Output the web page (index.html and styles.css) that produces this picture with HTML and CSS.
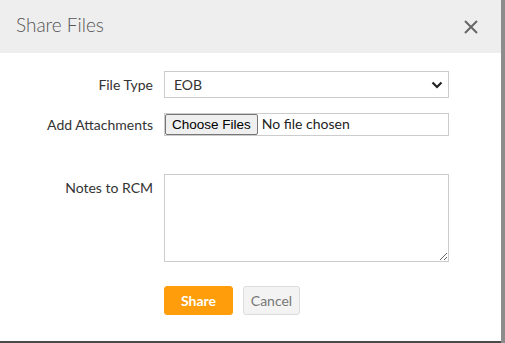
FILE: index.html
```html
<!DOCTYPE html>
<html lang="en">
<head>
    <meta charset="UTF-8">
    <meta name="viewport" content="width=device-width, initial-scale=1.0">
    <title>Share Files</title>
    <link rel="stylesheet" href="styles.css">
</head>
<body>

    <!-- Share Files modal -->
    <div class="modal">
        <div class="modal-header">
            <h4 class="modal-title">Share Files</h4>
            <button class="close-btn" aria-label="Close">
                <svg width="16" height="16" viewBox="0 0 16 16">
                    <path d="M2 2 L14 14 M14 2 L2 14" stroke="#666" stroke-width="2" fill="none"/>
                </svg>
            </button>
        </div>

        <form class="modal-body">
            <label class="form-label">File Type</label>
            <div class="select-wrap">
                <select class="form-select">
                    <option>EOB</option>
                </select>
                <svg class="chevron" width="12" height="8" viewBox="0 0 12 8">
                    <path d="M1.5 1.5 L6 6 L10.5 1.5" stroke="#222" stroke-width="2.2" fill="none"/>
                </svg>
            </div>

            <label class="form-label">Add Attachments</label>
            <input type="file" class="form-file" multiple>

            <label class="form-label notes-label">Notes to RCM</label>
            <textarea class="form-notes"></textarea>

            <div></div>
            <div class="actions">
                <button type="button" class="btn btn-share">Share</button>
                <button type="button" class="btn btn-cancel">Cancel</button>
            </div>
        </form>
    </div>

</body>
</html>
```

FILE: styles.css
```css
/* General */
body {
    margin: 0;
    background: #8c8c8c;
    font-family: Lato, "Open Sans", sans-serif;
    color: #333;
    height: 343px;
    overflow: hidden;
}

/* Modal */
.modal {
    width: 501px;
    height: 341px;
    background: #fff;
    border-bottom: 2px solid #4a4a4a;
}

.modal-header {
    display: flex;
    align-items: center;
    justify-content: space-between;
    background: #eeeeee;
    height: 53px;
    padding: 0 22px 0 16px;
}

.modal-title {
    margin: 0;
    font-size: 19px;
    font-weight: 300;
    color: #555;
    padding-bottom: 4px;
}

.close-btn {
    border: none;
    background: none;
    padding: 0;
    cursor: pointer;
    display: flex;
}

/* Form */
.modal-body {
    display: grid;
    grid-template-columns: 153px 285px;
    column-gap: 11px;
    row-gap: 15px;
    padding-top: 18px;
    margin: 0;
}

.form-label {
    font-size: 14px;
    color: #333;
    text-align: right;
    align-self: center;
}

.notes-label {
    align-self: start;
    padding-top: 5px;
    margin-top: 23px;
}

.select-wrap {
    position: relative;
    display: flex;
}

.form-select {
    flex: 1;
    height: 27px;
    border: 1px solid #ccc;
    border-radius: 0;
    background: #fff;
    font-family: Lato, sans-serif;
    font-size: 14px;
    color: #333;
    padding: 0 9px;
    outline: none;
    appearance: none;
}

.chevron {
    position: absolute;
    right: 6px;
    top: 10px;
    pointer-events: none;
}

.form-file {
    height: 23px;
    border: 1px solid #ccc;
    font-family: Lato, sans-serif;
    font-size: 14px;
    color: #222;
    padding: 0;
    box-sizing: border-box;
}

.form-file::file-selector-button {
    height: 21px;
    margin: 0 4px 0 0;
    padding: 0 6px;
    font-family: "Liberation Sans", Arial, sans-serif;
    font-size: 13.5px;
    color: #000;
    background: #efefef;
    border: 1px solid #767676;
    border-radius: 2px;
}

.form-notes {
    height: 88px;
    margin-top: 23px;
    border: 1px solid #ccc;
    box-sizing: border-box;
    font-family: Lato, sans-serif;
    outline: none;
}

/* Buttons */
.actions {
    display: flex;
    gap: 10px;
    margin-top: 9px;
}

.btn {
    height: 29px;
    font-family: Lato, sans-serif;
    font-size: 14px;
    border-radius: 3px;
    cursor: pointer;
}

.btn-share {
    width: 69px;
    background: #ff9d0a;
    border: 1px solid #ff9d0a;
    color: #fff;
    font-weight: 700;
}

.btn-cancel {
    width: 57px;
    background: #f3f3f3;
    border: 1px solid #dcdcdc;
    color: #777;
}
```
